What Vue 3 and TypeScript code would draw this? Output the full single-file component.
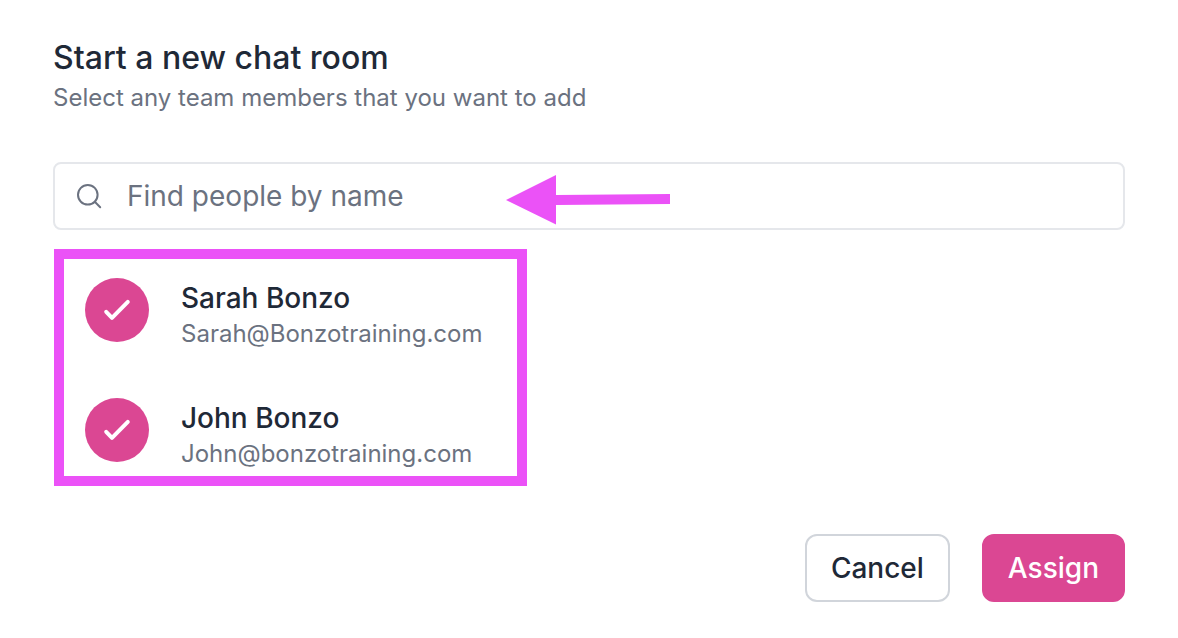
<script setup lang="ts">
import { ref } from 'vue'

interface Member {
  id: string
  name: string
  email: string
  selected: boolean
}

const search = ref('')
const members = ref<Member[]>([
  { id: 'sarah', name: 'Sarah Bonzo', email: 'Sarah@Bonzotraining.com', selected: true },
  { id: 'john', name: 'John Bonzo', email: 'John@bonzotraining.com', selected: true },
])
</script>

<template>
  <form class="dialog" @submit.prevent>
    <header>
      <h1>Start a new chat room</h1>
      <p class="intro">Select any team members that you want to add</p>
    </header>

    <div class="search">
      <svg class="search-icon" viewBox="0 0 28 28" aria-hidden="true">
        <circle cx="12.8" cy="12.8" r="9.8" />
        <path d="M19.8 19.8 L25.2 25.2" />
      </svg>
      <input v-model="search" type="search" aria-label="Find people by name" placeholder="Find people by name" />
      <svg class="arrow" viewBox="0 0 164 50" aria-hidden="true">
        <path d="M0 25 L50 0 V20 L164 19 V29 L50 30 V49.5 Z" />
      </svg>
    </div>

    <div class="members">
      <label v-for="member in members" :key="member.id" class="member">
        <input v-model="member.selected" type="checkbox" />
        <span class="avatar">
          <svg v-if="member.selected" viewBox="0 0 64 64" aria-hidden="true">
            <path d="M21.2 33.8 L27 39.8 L42.8 23.8" />
          </svg>
        </span>
        <span class="details">
          <span class="name">{{ member.name }}</span>
          <span class="email">{{ member.email }}</span>
        </span>
      </label>
    </div>

    <footer>
      <button type="button" class="cancel">Cancel</button>
      <button type="submit" class="assign">Assign</button>
    </footer>
  </form>
</template>

<style>
body {
  background: #fff;
}
</style>

<style scoped>
* {
  box-sizing: border-box;
}
.dialog {
  padding: 38px 53px 36px;
  font-family: Inter, 'Liberation Sans', sans-serif;
  color: #1f2937;
}
h1 {
  margin: 0;
  font-size: 32px;
  line-height: 40px;
  font-weight: 500;
}
.intro {
  margin: 0;
  font-size: 24px;
  line-height: 40px;
  color: #6b7280;
}
.search {
  position: relative;
  display: flex;
  align-items: center;
  gap: 24px;
  height: 68px;
  margin-top: 44px;
  padding: 0 20px;
  border: 2px solid #e5e7eb;
  border-radius: 8px;
}
.search-icon {
  flex: none;
  width: 28px;
  height: 28px;
  fill: none;
  stroke: #6b7280;
  stroke-width: 2;
  stroke-linecap: round;
}
.search input {
  flex: 1;
  min-width: 0;
  padding: 0;
  border: 0;
  outline: 0;
  background: transparent;
  font: inherit;
  font-size: 28px;
  line-height: 40px;
  appearance: none;
}
.search input::placeholder {
  color: #6b7280;
  opacity: 1;
}
.arrow {
  position: absolute;
  left: 451px;
  top: 11px;
  width: 164px;
  height: 50px;
  fill: #eb52f7;
  pointer-events: none;
}
.members {
  display: flex;
  flex-direction: column;
  gap: 48px;
  width: fit-content;
  margin: 19px 0 0 1px;
  padding: 19px 35px 6px 21px;
  border: 10px solid #eb52f7;
}
.member {
  position: relative;
  display: flex;
  align-items: flex-start;
  gap: 32px;
}
.member input {
  position: absolute;
  width: 64px;
  height: 64px;
  margin: 0;
  opacity: 0;
}
.avatar {
  flex: none;
  width: 64px;
  height: 64px;
  border-radius: 50%;
  background: #db4793;
}
.avatar svg {
  display: block;
  fill: none;
  stroke: #fff;
  stroke-width: 4;
  stroke-linecap: round;
  stroke-linejoin: round;
}
.details {
  display: flex;
  flex-direction: column;
}
.name {
  font-size: 28px;
  line-height: 40px;
  font-weight: 500;
}
.email {
  font-size: 24px;
  line-height: 32px;
  color: #6b7280;
}
footer {
  display: flex;
  justify-content: flex-end;
  gap: 32px;
  margin-top: 48px;
}
button {
  height: 68px;
  padding: 0 24px;
  border: 2px solid #d1d5db;
  border-radius: 12px;
  background: #fff;
  color: #1f2937;
  font: inherit;
  font-size: 28px;
  font-weight: 500;
  line-height: 40px;
}
.assign {
  border-color: #db4793;
  background: #db4793;
  color: #fff;
}
</style>
